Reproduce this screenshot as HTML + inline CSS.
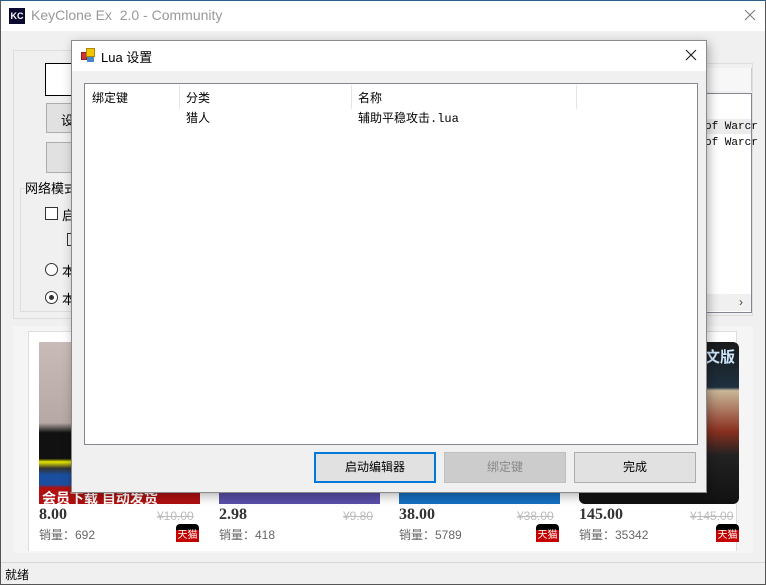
<!DOCTYPE html>
<html><head><meta charset="utf-8"><style>
*{box-sizing:border-box;margin:0;padding:0}
body{width:766px;height:585px;overflow:hidden;background:#f0f0f0;font-family:"Liberation Sans","Noto Sans CJK SC",sans-serif;font-size:12px;color:#000;position:relative}
.a{position:absolute}
.win{left:0;top:0;width:766px;height:585px;border:1px solid #555;border-top:1px solid #2b5f8a}
.pr{font-family:'Liberation Serif',serif;font-weight:bold;font-size:16px;color:#333;top:506px}
.op{color:#bbb;text-decoration:line-through;font-size:12px;top:509px}
.sl{color:#666;top:526px}
</style></head><body>
<div class="a win"></div>
<div class="a" style="left:1px;top:1px;width:764px;height:30px;background:#fff"></div>
<div class="a" style="left:9px;top:8px;width:16px;height:16px;background:#0a0a30;color:#fff;font-size:9px;font-weight:bold;line-height:16px;text-align:center">KC</div>
<div class="a" style="left:31px;top:7px;font-size:14px;color:#999">KeyClone Ex &nbsp;2.0 - Community</div>
<svg class="a" style="left:744px;top:9px" width="12" height="12"><path d="M1 1L11 11M11 1L1 11" stroke="#777" stroke-width="1"/></svg>

<!-- left group -->
<div class="a" style="left:13px;top:50px;width:250px;height:269px;border:1px solid #ddd"></div>
<div class="a" style="left:45px;top:63px;width:40px;height:33px;border:1px solid #000;background:#fff"></div>
<div class="a" style="left:46px;top:103px;width:40px;height:30px;border:1px solid #adadad;background:#e1e1e1;padding:6px 14px;font-size:13px">设</div>
<div class="a" style="left:46px;top:142px;width:40px;height:31px;border:1px solid #adadad;background:#e1e1e1"></div>
<div class="a" style="left:20px;top:188px;width:60px;height:124px;border:1px solid #ddd"></div>
<div class="a" style="left:25px;top:178px;background:#f0f0f0;font-size:13px">网络模式</div>
<div class="a" style="left:45px;top:207px;width:13px;height:13px;border:1px solid #333;background:#fff"></div>
<div class="a" style="left:62px;top:205px;font-size:13px">启</div>
<div class="a" style="left:67px;top:233px;width:6px;height:13px;border:1px solid #333"></div>
<div class="a" style="left:45px;top:263px;width:13px;height:13px;border:1px solid #333;border-radius:50%;background:#fff"></div>
<div class="a" style="left:62px;top:261px;font-size:13px">本</div>
<div class="a" style="left:45px;top:291px;width:13px;height:13px;border:1px solid #333;border-radius:50%;background:#fff"><div class="a" style="left:3px;top:3px;width:5px;height:5px;border-radius:50%;background:#333"></div></div>
<div class="a" style="left:62px;top:289px;font-size:13px">本</div>

<!-- right panel -->
<div class="a" style="left:700px;top:63px;width:53px;height:253px;border:1px solid #ddd"></div>
<div class="a" style="left:700px;top:68px;width:52px;height:23px;background:#f7f7f7;border-right:1px solid #ccc"></div>
<div class="a" style="left:700px;top:93px;width:52px;height:220px;background:#fff;border:1px solid #828790"></div>
<div class="a" style="left:700px;top:119px;width:51px;height:15px;background:#ececec"></div>
<div class="a" style="left:705px;top:121px;font-family:'Liberation Mono',monospace;font-size:11px">of Warcr</div>
<div class="a" style="left:705px;top:137px;font-family:'Liberation Mono',monospace;font-size:11px">of Warcr</div>
<div class="a" style="left:701px;top:294px;width:50px;height:17px;background:#f0f0f0"></div>
<div class="a" style="left:739px;top:295px;font-size:12px;color:#444">›</div>

<!-- product area -->
<div class="a" style="left:13px;top:326px;width:740px;height:227px;background:#f5f5f5"></div>
<div class="a" style="left:28px;top:331px;width:709px;height:220px;background:#fff;border:1px solid #ddd;border-bottom:none"></div>
<div class="a" style="left:39px;top:342px;width:161px;height:162px;background:linear-gradient(#c9bcb8 0,#b5a8a5 50%,#111 56%,#111 72%,#e8e800 74%,#333 78%,#1a4fa0 82%,#1a4fa0 88%,#b01010 90%)"></div>
<div class="a" style="left:42px;top:488px;color:#fff;font-size:14px;font-weight:bold">会员下载 自动发货</div>
<div class="a" style="left:219px;top:480px;width:161px;height:24px;background:#5a4fa8"></div>
<div class="a" style="left:399px;top:480px;width:161px;height:24px;background:#1570c0"></div>
<div class="a" style="left:579px;top:342px;width:160px;height:162px;border-radius:6px;background:linear-gradient(#1a1a1a 0,#1e3040 28%,#c9b79a 30%,#8a3020 55%,#222 70%,#111 100%)"></div>
<div class="a" style="left:705px;top:346px;color:#cfe8ff;font-size:15px;font-weight:bold">文版</div>
<div class="a pr" style="left:39px">8.00</div>
<div class="a pr" style="left:219px">2.98</div>
<div class="a pr" style="left:399px">38.00</div>
<div class="a pr" style="left:579px">145.00</div>
<div class="a op" style="left:157px">¥10.00</div>
<div class="a op" style="left:343px">¥9.80</div>
<div class="a op" style="left:517px">¥38.00</div>
<div class="a op" style="left:690px">¥145.00</div>
<div class="a sl" style="left:39px">销量：692</div>
<div class="a sl" style="left:219px">销量：418</div>
<div class="a sl" style="left:399px">销量：5789</div>
<div class="a sl" style="left:579px">销量：35342</div>
<div class="a" style="left:176px;top:524px;width:23px;height:18px;background:#000;border-radius:4px 4px 0 0"><div class="a" style="left:0;top:6px;width:23px;height:12px;background:#c40000;color:#fff;font-size:10px;line-height:12px;text-align:center">天猫</div></div>
<div class="a" style="left:536px;top:524px;width:23px;height:18px;background:#000;border-radius:4px 4px 0 0"><div class="a" style="left:0;top:6px;width:23px;height:12px;background:#c40000;color:#fff;font-size:10px;line-height:12px;text-align:center">天猫</div></div>
<div class="a" style="left:716px;top:524px;width:23px;height:18px;background:#000;border-radius:4px 4px 0 0"><div class="a" style="left:0;top:6px;width:23px;height:12px;background:#c40000;color:#fff;font-size:10px;line-height:12px;text-align:center">天猫</div></div>

<!-- status bar -->
<div class="a" style="left:1px;top:562px;width:764px;height:1px;background:#d7d7d7"></div>
<div class="a" style="left:5px;top:566px;font-size:12px">就绪</div>

<!-- dialog -->
<div class="a" style="left:71px;top:40px;width:636px;height:453px;background:#f0f0f0;border:1px solid #8a8a8a;box-shadow:2px 3px 10px rgba(0,0,0,.3)"></div>
<div class="a" style="left:72px;top:41px;width:634px;height:30px;background:#fff"></div>
<div class="a" style="left:81px;top:48px;width:14px;height:14px">
<div class="a" style="left:0;top:4px;width:6px;height:8px;background:#c33;border:1px solid #822"></div>
<div class="a" style="left:5px;top:0;width:9px;height:9px;background:#f5c400;border:1px solid #a80"></div>
<div class="a" style="left:6px;top:9px;width:7px;height:5px;background:#48c"></div></div>
<div class="a" style="left:101px;top:47px;font-size:13px">Lua 设置</div>
<svg class="a" style="left:685px;top:49px" width="12" height="12"><path d="M1 1L11 11M11 1L1 11" stroke="#222" stroke-width="1.2"/></svg>
<div class="a" style="left:84px;top:83px;width:614px;height:362px;background:#fff;border:1px solid #828790"></div>
<div class="a" style="left:179px;top:85px;width:1px;height:24px;background:#e5e5e5"></div>
<div class="a" style="left:351px;top:85px;width:1px;height:24px;background:#e5e5e5"></div>
<div class="a" style="left:576px;top:85px;width:1px;height:24px;background:#e5e5e5"></div>
<div class="a" style="left:92px;top:89px">绑定键</div>
<div class="a" style="left:186px;top:89px">分类</div>
<div class="a" style="left:358px;top:89px">名称</div>
<div class="a" style="left:186px;top:109px">猎人</div>
<div class="a" style="left:358px;top:109px;font-family:'Liberation Mono','Noto Sans CJK SC',monospace;font-size:12px">辅助平稳攻击.lua</div>
<div class="a" style="left:314px;top:452px;width:122px;height:31px;border:2px solid #0078d7;background:#e1e1e1;text-align:center;line-height:27px">启动编辑器</div>
<div class="a" style="left:444px;top:452px;width:122px;height:31px;border:1px solid #bfbfbf;background:#ccc;color:#888;text-align:center;line-height:29px">绑定键</div>
<div class="a" style="left:574px;top:452px;width:122px;height:31px;border:1px solid #adadad;background:#e1e1e1;text-align:center;line-height:29px">完成</div>
</body></html>
